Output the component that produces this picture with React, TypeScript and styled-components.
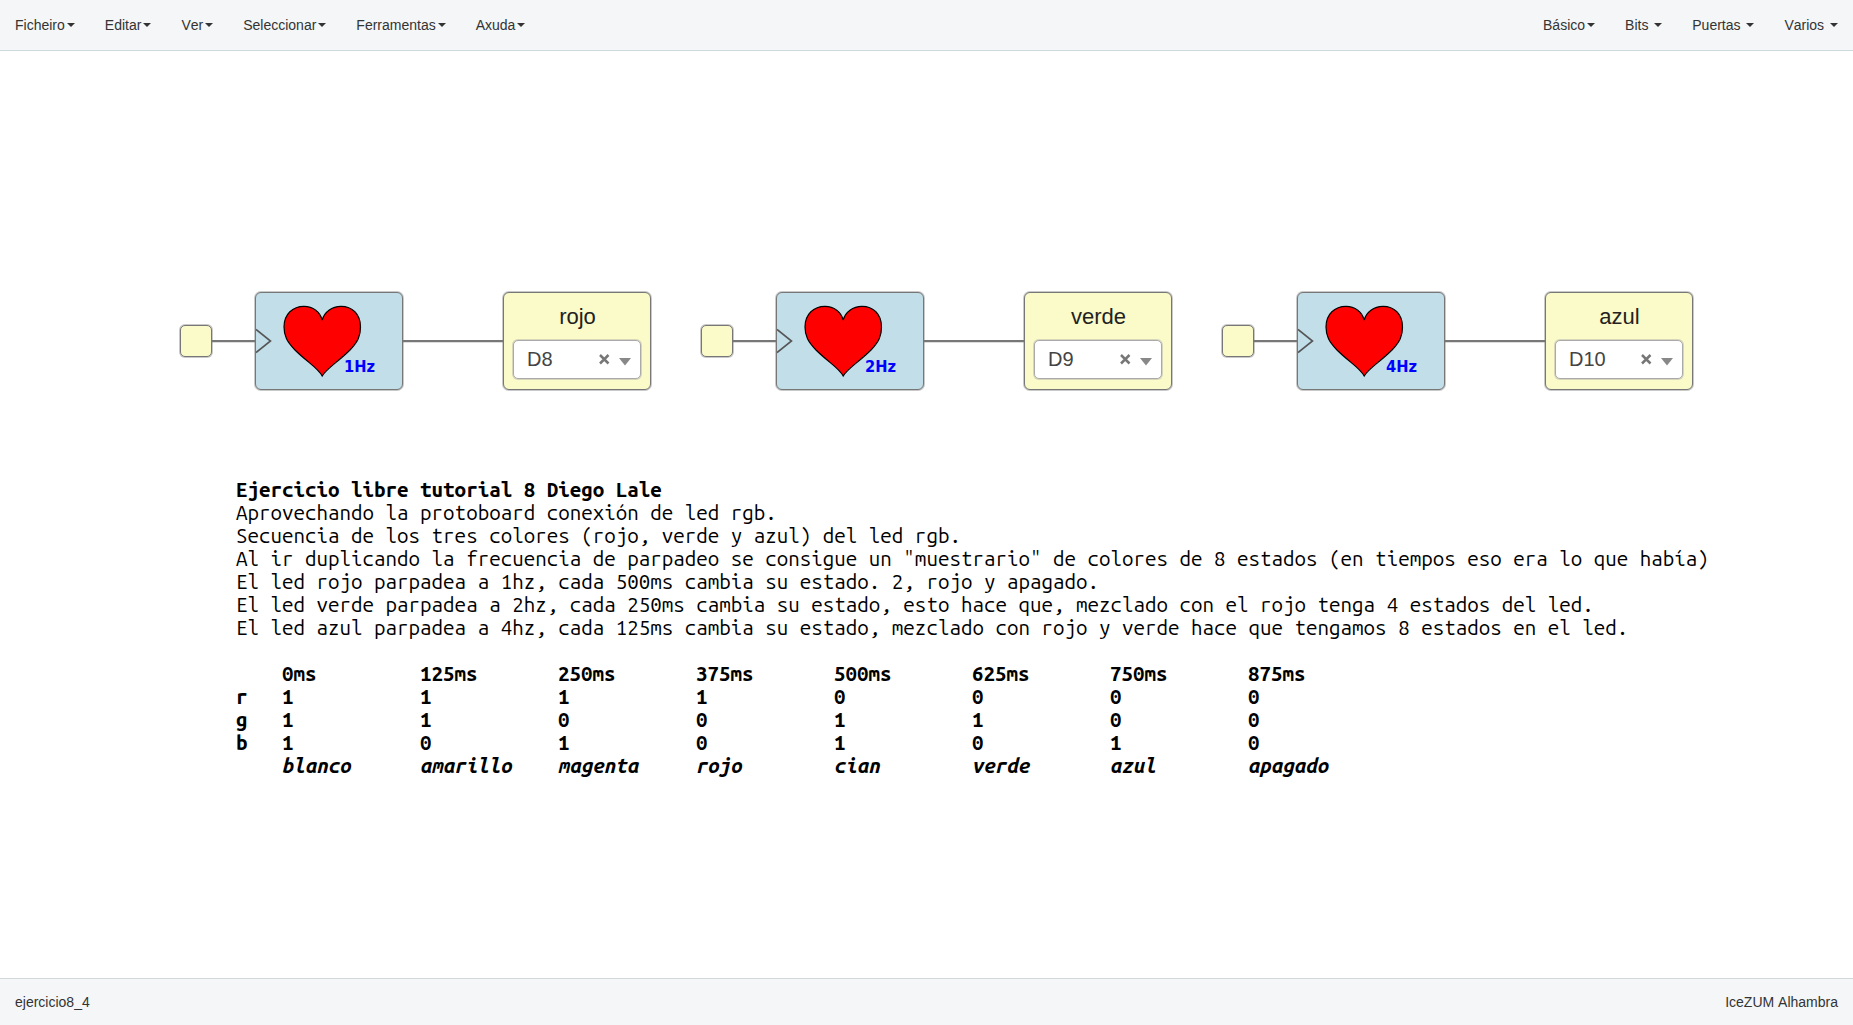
import React from "react";
import styled, { createGlobalStyle } from "styled-components";

const GlobalStyle = createGlobalStyle`
  *, *::before, *::after { box-sizing: border-box; }
  body {
    margin: 0;
    background: #fff;
    color: #333;
    font: 14px/20px "Liberation Sans", Arial, sans-serif;
    font-kerning: none;
    overflow: hidden;
  }
`;

const Page = styled.div`
  display: flex;
  flex-direction: column;
  height: 100vh;
`;

const Navbar = styled.nav`
  display: flex;
  justify-content: space-between;
  flex: 0 0 51px;
  background: #f4f6f7;
  border-bottom: 1px solid #cfdadd;
`;

const Menu = styled.div`
  display: flex;
`;

const MenuItem = styled.a`
  display: flex;
  align-items: center;
  padding: 0 15px;
  color: #333;
  white-space: pre;
`;

const Caret = styled.span`
  width: 8px;
  margin-left: 2px;
  border-top: 4px solid #333;
  border-left: 4px solid transparent;
  border-right: 4px solid transparent;
`;

const Canvas = styled.main`
  flex: 1;
  padding: 241px 0 0 180px;
`;

const Circuit = styled.div`
  display: flex;
  gap: 50px;
`;

const Chain = styled.section`
  display: flex;
  align-items: center;
  flex: none;
`;

const Wire = styled.div<{ $length: number }>`
  width: ${(p) => p.$length}px;
  height: 2px;
  background: #777;
  box-shadow: 0 1px 0 rgba(119, 119, 119, 0.25);
`;

const Port = styled.div`
  width: 32px;
  height: 32px;
  background: #fbfac9;
  border: 1px solid #777;
  border-radius: 5px;
  box-shadow: 0 0 0 1px rgba(119, 119, 119, 0.4);
`;

const Block = styled.div`
  width: 148px;
  height: 98px;
  background: #c1dee9;
  border: 1px solid #777;
  border-radius: 6px;
  box-shadow: 0 0 0 1px rgba(119, 119, 119, 0.4);
`;

const BlockArt = styled.svg`
  display: block;
  width: 146px;
  height: 96px;
`;

const OutputBlock = styled(Block)`
  display: flex;
  flex-direction: column;
  align-items: center;
  background: #fbfac9;
  padding-top: 11px;
`;

const OutputName = styled.div`
  padding-left: 1px;
  color: #222;
  font-size: 22px;
  line-height: 26px;
`;

const PinSelect = styled.div`
  display: flex;
  align-items: center;
  flex: none;
  width: 128px;
  height: 39px;
  margin-top: 10px;
  padding: 0 9px 1px 13px;
  background: #fff;
  border: 1px solid #aaa;
  border-radius: 5px;
  box-shadow: 0 0 0 1px rgba(170, 170, 170, 0.45);
  color: #444;
  font-size: 20px;
  line-height: 24px;
`;

const PinName = styled.span`
  flex: 1;
`;

const SelectIcons = styled.svg`
  width: 32px;
  height: 16px;
`;

const Notes = styled.article`
  margin: 88px 0 0 56px;
  color: #000;
  font-family: "Ubuntu Mono", "DejaVu Sans Mono", monospace;
  font-size: 20.55px;
  line-height: 23px;
  white-space: pre;
`;

const Title = styled.div`
  font-weight: bold;
`;

const Line = styled.div``;

const Table = styled.div`
  display: grid;
  grid-template-columns: 46px repeat(8, 138px);
  margin-top: 23px;
  font-weight: bold;
`;

const Cell = styled.span<{ $italic?: boolean }>`
  font-style: ${(p) => (p.$italic ? "italic" : "normal")};
`;

const Footer = styled.footer`
  display: flex;
  justify-content: space-between;
  align-items: center;
  flex: 0 0 47px;
  padding: 0 15px;
  background: #f4f6f7;
  border-top: 1px solid #d3d8db;
`;

const leftMenus = ["Ficheiro", "Editar", "Ver", "Seleccionar", "Ferramentas", "Axuda"];
const rightMenus = ["Básico", "Bits ", "Puertas ", "Varios "];

const chains = [
  { freq: "1Hz", name: "rojo", pin: "D8" },
  { freq: "2Hz", name: "verde", pin: "D9" },
  { freq: "4Hz", name: "azul", pin: "D10" },
];

const lines = [
  "Aprovechando la protoboard conexión de led rgb.",
  "Secuencia de los tres colores (rojo, verde y azul) del led rgb.",
  'Al ir duplicando la frecuencia de parpadeo se consigue un "muestrario" de colores de 8 estados (en tiempos eso era lo que había)',
  "El led rojo parpadea a 1hz, cada 500ms cambia su estado. 2, rojo y apagado.",
  "El led verde parpadea a 2hz, cada 250ms cambia su estado, esto hace que, mezclado con el rojo tenga 4 estados del led.",
  "El led azul parpadea a 4hz, cada 125ms cambia su estado, mezclado con rojo y verde hace que tengamos 8 estados en el led.",
];

const table = [
  ["", "0ms", "125ms", "250ms", "375ms", "500ms", "625ms", "750ms", "875ms"],
  ["r", "1", "1", "1", "1", "0", "0", "0", "0"],
  ["g", "1", "1", "0", "0", "1", "1", "0", "0"],
  ["b", "1", "0", "1", "0", "1", "0", "1", "0"],
  ["", "blanco", "amarillo", "magenta", "rojo", "cian", "verde", "azul", "apagado"],
];

function MenuGroup({ items }: { items: string[] }) {
  return (
    <Menu>
      {items.map((item) => (
        <MenuItem key={item}>
          {item}
          <Caret />
        </MenuItem>
      ))}
    </Menu>
  );
}

function HeartBlock({ freq }: { freq: string }) {
  return (
    <Block>
      <BlockArt viewBox="0 0 146 96">
        <path d="M0 36.500 L14.500 48 L0 59.500" fill="none" stroke="#555" strokeWidth="1.6" />
        <path
          d="M66.200 83 C62 75 51 69 39 57 C31 48.500 28 43 28 34 C28 21 37 13.300 48 13.300 C57 13.300 64.200 19 66.200 27 C68.200 19 76 13.300 85 13.300 C96 13.300 104.500 21 104.500 34 C104.500 43 102 48.500 94 57 C82 69 71 75 66.200 83 Z"
          fill="#f00"
          stroke="#000"
          strokeWidth="1.2"
        />
        <text
          x="88"
          y="79"
          fill="#00f"
          fontFamily="'DejaVu Sans Condensed', 'DejaVu Sans', sans-serif"
          fontWeight="bold"
          fontStretch="condensed"
          fontSize="16"
          textLength="31"
          lengthAdjust="spacingAndGlyphs"
        >
          {freq}
        </text>
      </BlockArt>
    </Block>
  );
}

export default function App() {
  return (
    <Page>
      <GlobalStyle />
      <Navbar>
        <MenuGroup items={leftMenus} />
        <MenuGroup items={rightMenus} />
      </Navbar>
      <Canvas>
        <Circuit>
          {chains.map((c) => (
            <Chain key={c.pin}>
              <Port />
              <Wire $length={43} />
              <HeartBlock freq={c.freq} />
              <Wire $length={100} />
              <OutputBlock>
                <OutputName>{c.name}</OutputName>
                <PinSelect>
                  <PinName>{c.pin}</PinName>
                  <SelectIcons viewBox="0 0 32 16">
                    <path d="M1 4 L9.500 12.500 M9.500 4 L1 12.500" stroke="#777" strokeWidth="2.500" />
                    <path d="M20 7 H32 L26 14.500 Z" fill="#888" />
                  </SelectIcons>
                </PinSelect>
              </OutputBlock>
            </Chain>
          ))}
        </Circuit>
        <Notes>
          <Title>Ejercicio libre tutorial 8 Diego Lale</Title>
          {lines.map((line) => (
            <Line key={line}>{line}</Line>
          ))}
          <Table>
            {table.map((row, r) =>
              row.map((value, i) => (
                <Cell key={`${r}-${i}`} $italic={r === 4}>
                  {value}
                </Cell>
              ))
            )}
          </Table>
        </Notes>
      </Canvas>
      <Footer>
        <span>ejercicio8_4</span>
        <span>IceZUM Alhambra</span>
      </Footer>
    </Page>
  );
}
